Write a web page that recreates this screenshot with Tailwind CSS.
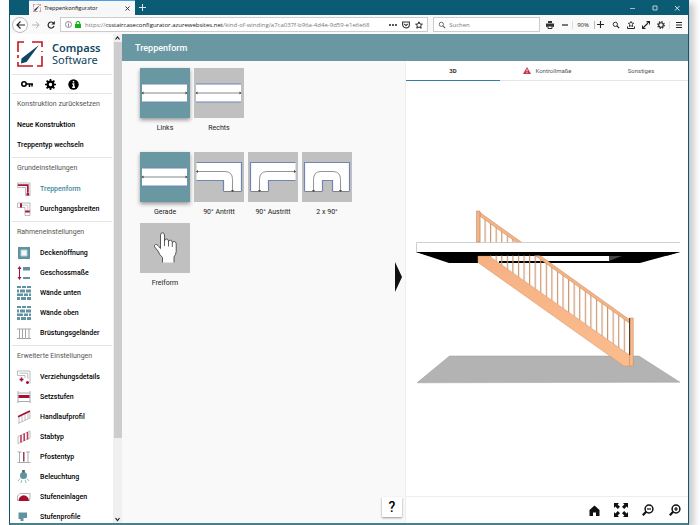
<!DOCTYPE html>
<html lang="de">
<head>
<meta charset="utf-8">
<title>Treppenkonfigurator</title>
<script src="https://cdn.jsdelivr.net/npm/@tailwindcss/browser@4"></script>
</head>
<body class="h-screen overflow-hidden bg-white pl-[9px] pr-[11px] font-['Roboto',sans-serif] text-[7px] leading-[10px] text-[#222]">
<svg class="hidden">
  <symbol id="logo" viewBox="0 0 26 26">
    <path d="M1 11V1h6M10 1h15v5M25 10v15h-5M16 25H1v-4M1 17v-3" fill="none" stroke="#c4161c" stroke-width="1.600" stroke-dasharray="none"/>
    <path d="M10 0h5v2h-5zM24 11h2v4h-2z" fill="#fff"/>
    <path d="M22 4 9.500 21 4 22.500 4.500 17.500Z" fill="#10465f"/>
  </symbol>
  <symbol id="magnifier" viewBox="0 0 12 12">
    <circle cx="5" cy="5" r="3.200" fill="none" stroke="currentColor" stroke-width="1.400"/>
    <path d="m7.400 7.400 3.400 3.400" stroke="currentColor" stroke-width="1.800"/>
  </symbol>
  <symbol id="wall" viewBox="0 0 14 14">
    <path d="M0 0h4v2H0zM5 0h4v2H5zM10 0h4v2h-4zM0 3.500h2v3H0zM3 3.500h5v3H3zM9 3.500h5v3H9zM0 7.500h6v2.500H0zM7 7.500h4v2.500H7zM12 7.500h2v2.500h-2zM0 11h3v3H0zM4 11h5v3H4zM10 11h4v3h-4z" fill="#5f93a0"/>
  </symbol>
  <symbol id="straight" viewBox="0 0 50 50">
    <path d="M2 16h45v18H2z" fill="#fff"/>
    <path d="M2 16h45M2 34h45" stroke="#6f86b5"/>
    <path d="M2 25h45" stroke="#555" stroke-width=".7"/>
    <path d="m1.500 25 2-1.500v3zM47.500 25l-2-1.500v3z" fill="#444"/>
  </symbol>
</svg>

<div class="flex h-full flex-col border-x border-b-2 border-[#0d566f] border-b-[#4a8189] bg-white shadow-[5px_3px_7px_rgba(0,0,0,0.22)]">
  <!-- Title bar -->
  <div class="flex h-[15px] shrink-0 items-stretch bg-[#0a5b73] text-white">
    <div class="ml-[19px] flex w-[106px] items-center border-t border-[#4aa0e8] bg-[#f7f7f7] pl-1 pr-[5px] text-[#333]">
      <svg class="mr-[3px] size-2" ><use href="#logo"/></svg>
      <span class="flex-1 font-['Lato',sans-serif] text-[6px]">Treppenkonfigurator</span>
      <button aria-label="Tab schließen"><svg class="size-[5px]" viewBox="0 0 5 5"><path d="m.5.5 4 4m0-4-4 4" stroke="#333"/></svg></button>
    </div>
    <button class="ml-1" aria-label="Neuer Tab"><svg class="size-[7px]" viewBox="0 0 7 7"><path d="M3.500 0v7M0 3.500h7" stroke="#d5e6ec"/></svg></button>
    <div class="ml-auto flex items-center gap-4 pr-2">
      <button aria-label="Minimieren"><svg class="size-[6px]" viewBox="0 0 6 6"><path d="M0 3.500h5" stroke="#9fc0ca"/></svg></button>
      <button aria-label="Maximieren"><svg class="size-[6px]" viewBox="0 0 6 6"><path d="M1 1h4v4H1z" fill="none" stroke="#b9d2da"/></svg></button>
      <button aria-label="Schließen"><svg class="size-[6px]" viewBox="0 0 6 6"><path d="m1 1 4.500 4.500m0-4.500L1 5.500" stroke="#dbe9ed"/></svg></button>
    </div>
  </div>

  <!-- Toolbar -->
  <div class="flex h-[19px] shrink-0 items-center bg-[#f9f9fa] font-['Open_Sans',sans-serif] text-[6px] text-[#222]">
    <button aria-label="Zurück" class="ml-[2px] flex size-4 items-center justify-center rounded-full border border-[#bbb] bg-white"><svg class="h-2 w-[9px]" viewBox="0 0 9 8"><path d="M9 4H1m3.500-3.500L1 4l3.500 3.500" fill="none" stroke="#222" stroke-width="1.200"/></svg></button>
    <button aria-label="Vor" class="ml-[4px]"><svg class="h-2 w-2" viewBox="0 0 9 8"><path d="M0 4h8M4.500.5 8 4 4.500 7.500" fill="none" stroke="#aaa"/></svg></button>
    <button aria-label="Neu laden" class="ml-[7px]"><svg class="size-2" viewBox="0 0 8 8"><path d="M6.500 2.200A3 3 0 1 0 7 4.800" fill="none" stroke="#222" stroke-width="1.200"/><path d="M7.800 0v3.400H4.400z" fill="#222"/></svg></button>
    <div class="ml-[5px] flex h-[15px] w-[141px] grow items-center overflow-hidden border border-[#ccc] bg-white px-1">
      <svg class="size-[7px] shrink-0" viewBox="0 0 7 7"><circle cx="3.500" cy="3.500" r="3" fill="none" stroke="#777" stroke-width=".8"/><path d="M3.500 3v2.500M3.500 1.500v.9" stroke="#777" stroke-width=".9"/></svg>
      <svg class="ml-[3px] mr-1 h-[7px] w-[6px] shrink-0" viewBox="0 0 6 7"><path d="M0 3h6v4H0z" fill="#12b312"/><path d="M1.200 3.200V2.300a1.800 1.800 0 0 1 3.600 0v.9" fill="none" stroke="#12b312" stroke-width="1.100"/></svg>
      <span class="w-0 grow overflow-hidden whitespace-nowrap text-[#777]">https://<span class="text-[#111]">csstaircaseconfigurator.azurewebsites.net</span>/kind-of-winding/a7ca037f-b96a-4d4e-9d59-e1e6e68</span>
      <button class="ml-4" aria-label="Seitenaktionen"><svg class="h-2 w-2" viewBox="0 0 8 8"><path d="M0 3.300h2v1.500H0zM3 3.300h2v1.500H3zM6 3.300h2v1.500H6z" fill="#222"/></svg></button>
      <button class="ml-[5px]" aria-label="Pocket"><svg class="size-2" viewBox="0 0 8 8"><path d="M.6 1h6.800v2.500a3.400 3.400 0 0 1-6.800 0zM2.300 3 4 4.600 5.700 3" fill="none" stroke="#333" stroke-width="1.100"/></svg></button>
      <button class="ml-[5px]" aria-label="Lesezeichen"><svg class="size-2" viewBox="0 0 8 8"><path d="m4 .8 1 2.200 2.400.2-1.800 1.600.6 2.400L4 6 1.800 7.200l.6-2.400L.6 3.200 3 3z" fill="none" stroke="#222"/></svg></button>
    </div>
    <label class="ml-[5px] flex h-[15px] w-[107px] items-center border border-[#ccc] bg-white px-1">
      <svg class="size-2 text-[#666]"><use href="#magnifier"/></svg>
      <input class="ml-[3px] w-0 grow bg-transparent font-['Open_Sans',sans-serif] text-[6px] outline-none placeholder:text-[#777]" placeholder="Suchen" aria-label="Suchen">
    </label>
    <button class="ml-[6px]" aria-label="Drucken"><svg class="size-2" viewBox="0 0 8 8"><path d="M2 0h4v2H2zM0 2.500h8v3.500H6.500V5h-5v1H0z" fill="#333"/><path d="M2 5h4v2.500H2z" fill="none" stroke="#333"/></svg></button>
    <button class="ml-[8px]" aria-label="Verkleinern"><svg class="h-2 w-[6px]" viewBox="0 0 6 8"><path d="M0 4h6" stroke="#222" stroke-width="1.200"/></svg></button>
    <span class="ml-[4px] h-2 border-l border-[#ddd] pl-[4px] leading-2">90%</span>
    <span class="ml-[5px] h-2 border-l border-[#bbb]"></span>
    <button class="ml-[2px]" aria-label="Vergrößern"><svg class="size-[7px]" viewBox="0 0 7 7"><path d="M0 3.500h7M3.500 0v7" stroke="#222" stroke-width="1.100"/></svg></button>
    <button class="ml-[8px]" aria-label="Suche"><svg class="size-2"><use href="#magnifier"/></svg></button>
    <button class="ml-[7px]" aria-label="Lesezeichen anzeigen"><svg class="size-2" viewBox="0 0 8 8"><path d="m4 .5.9 1.600 1.800.2-1.300 1.300.3 1.900L4 4.700l-1.700.8.3-1.900-1.300-1.300 1.800-.2z" fill="none" stroke="#222" stroke-width=".9"/><path d="M.5 5.500v2h7v-2" fill="none" stroke="#222"/></svg></button>
    <button class="ml-[7px]" aria-label="Vollbild"><svg class="size-2" viewBox="0 0 8 8"><path d="M1 7 7 1M4.500.6h3v3M.5 4.500v3h3" fill="none" stroke="#222" stroke-width="1.100"/></svg></button>
    <button class="ml-[7px]" aria-label="Einstellungen"><svg class="size-2" viewBox="0 0 8 8"><circle cx="4" cy="4" r="2.300" fill="none" stroke="#222" stroke-width="1.100"/><circle cx="4" cy="4" r="3.300" fill="none" stroke="#222" stroke-width="1.200" stroke-dasharray="1.300 1.290"/></svg></button>
    <button class="ml-[4px] mr-[6px] border-l border-[#ddd] pl-[6px]" aria-label="Menü"><svg class="h-2 w-[6px]" viewBox="0 0 6 8"><path d="M0 1.500h6M0 4h6M0 6.500h6" stroke="#222" stroke-width="1.100"/></svg></button>
  </div>

  <div class="flex min-h-0 flex-1">
    <!-- Sidebar -->
    <aside class="flex w-[112px] shrink-0">
      <div class="flex-1 overflow-hidden pl-[2px] pr-[1px]">
        <div class="flex h-10 items-center pl-[5px]">
          <svg class="size-[26px]"><use href="#logo"/></svg>
          <div class="ml-[9px] font-['Noto_Sans','Open_Sans',sans-serif] text-[11px] leading-[12px] text-[#10465f]"><div class="font-semibold">Compass</div><div>Software</div></div>
        </div>
        <div class="flex h-[19px] items-center border-t border-[#e4e4e4] pl-[9px] text-black">
          <button aria-label="Anmelden"><svg class="h-[8px] w-[12px]" viewBox="0 0 12 8"><circle cx="3" cy="4" r="2.200" fill="none" stroke="currentColor" stroke-width="1.600"/><path d="M5 4h7M8.500 4v3M11 4v2.500" stroke="currentColor" stroke-width="1.500"/></svg></button>
          <button class="ml-[12px]" aria-label="Optionen"><svg class="size-[11px]" viewBox="0 0 11 11"><circle cx="5.500" cy="5.500" r="2.800" fill="none" stroke="currentColor" stroke-width="2.200"/><path d="M5.500 0v2.500M5.500 8.500V11M0 5.500h2.500M8.500 5.500H11M1.600 1.600l1.800 1.800M7.600 7.600l1.800 1.800M1.600 9.400l1.800-1.800M7.600 3.400l1.800-1.800" stroke="currentColor" stroke-width="1.700"/></svg></button>
          <button class="ml-[12px]" aria-label="Info"><svg class="size-[11px]" viewBox="0 0 11 11"><circle cx="5.500" cy="5.500" r="5.200" fill="currentColor"/><path d="M5.500 2v1.600M4.300 5h1.400v3M4.200 8.200h2.800" stroke="#fff" stroke-width="1.400" fill="none"/></svg></button>
        </div>
        <nav class="font-medium text-black">
          <section class="border-t border-[#e4e4e4] pb-[2px] pl-[5px]">
            <h2 class="h-[21px] whitespace-nowrap font-normal leading-[21px] text-[#555]">Konstruktion zurücksetzen</h2>
            <a href="#" class="flex h-5 items-center">Neue Konstruktion</a>
            <a href="#" class="flex h-5 items-center">Treppentyp wechseln</a>
          </section>
          <section class="border-t border-[#e4e4e4] pb-[2px] pl-[5px]">
            <h2 class="h-[21px] font-normal leading-[21px] text-[#555]">Grundeinstellungen</h2>
            <a href="#" class="flex h-5 items-center gap-[9px] text-[#3f87a0]"><svg class="size-[14px]" viewBox="0 0 14 14"><path d="M.5 1h12.500v12.500H8.500V5.500H.5z" fill="#fff" stroke="#aaa" stroke-width=".8"/><path d="M1 3.200h9.800v7.500" fill="none" stroke="#a3163a" stroke-width="1.800"/><path d="M9.500 11h2.600v2.500H9.500z" fill="#a3163a"/></svg>Treppenform</a>
            <a href="#" class="flex h-5 items-center gap-[9px]"><svg class="size-[14px]" viewBox="0 0 14 14"><path d="M.5 1h12.500v12.500H8V5.500H.5z" fill="#fff" stroke="#aaa" stroke-width=".8"/><path d="M2.500 3.200h8.300v5" fill="none" stroke="#bbb" stroke-width=".8"/><path d="M3 1.200h2v4.200H3zM8.200 8.500h4.600v2H8.200z" fill="#a3163a"/></svg>Durchgangsbreiten</a>
          </section>
          <section class="border-t border-[#e4e4e4] pb-[2px] pl-[5px]">
            <h2 class="h-[21px] font-normal leading-[21px] text-[#555]">Rahmeneinstellungen</h2>
            <a href="#" class="flex h-5 items-center gap-[9px]"><svg class="size-[14px]" viewBox="0 0 14 14"><path d="M1 1h12v12H1z" fill="#5f93a0"/><path d="M4 4h6v6H4z" fill="#f3f7f8" stroke="#b7d0d6"/></svg>Deckenöffnung</a>
            <a href="#" class="flex h-5 items-center gap-[9px]"><svg class="size-[14px]" viewBox="0 0 14 14"><path d="M6 1h7v3.500H6zM6 11h7v2H6z" fill="#5f93a0"/><path d="M2.500 2v10" stroke="#a3163a"/><path d="m2.500 0 2 3h-4zM2.500 14l2-3h-4z" fill="#a3163a"/></svg>Geschossmaße</a>
            <a href="#" class="flex h-5 items-center gap-[9px]"><svg class="size-[14px]"><use href="#wall"/></svg>Wände unten</a>
            <a href="#" class="flex h-5 items-center gap-[9px]"><svg class="size-[14px]"><use href="#wall"/></svg>Wände oben</a>
            <a href="#" class="flex h-5 items-center gap-[9px]"><svg class="size-[14px]" viewBox="0 0 14 14"><path d="M0 3h14M0 12.500h14M2.500 3v9.500M5.500 3v9.500M8.500 3v9.500M12 3v9.500" stroke="#a5a5a5"/></svg>Brüstungsgeländer</a>
          </section>
          <section class="border-t border-[#e4e4e4] pb-[2px] pl-[5px]">
            <h2 class="h-[21px] font-normal leading-[21px] text-[#555]">Erweiterte Einstellungen</h2>
            <a href="#" class="flex h-5 items-center gap-[9px]"><svg class="size-[14px]" viewBox="0 0 14 14"><path d="M.5 5.500V1h12.500v12.500M.5 5.500H8V8M2.500 3.200h8.300v5.500" fill="none" stroke="#aaa" stroke-width=".8"/><path d="M4.500 7.500v4M2.500 9.500h4M10.500 11v3M9 12.500h3" stroke="#a3163a" stroke-width="1.600"/></svg>Verziehungsdetails</a>
            <a href="#" class="flex h-5 items-center gap-[9px]"><svg class="size-[14px]" viewBox="0 0 14 14"><path d="M1 1v12M13 1v12M1 3h12M1 11.500h12" stroke="#aaa"/><path d="M1.500 5h11v3h-11z" fill="#a80f2e"/></svg>Setzstufen</a>
            <a href="#" class="flex h-5 items-center gap-[9px]"><svg class="size-[14px]" viewBox="0 0 14 14"><path d="M2 7v6M5 5.500v6M8 4v6M11 3v5.500M13 2v6L1 13.500" fill="none" stroke="#b5b5b5" stroke-width=".9"/><path d="M1 6.800 13 1" stroke="#a80f2e" stroke-width="1.800"/></svg>Handlaufprofil</a>
            <a href="#" class="flex h-5 items-center gap-[9px]"><svg class="size-[14px]" viewBox="0 0 14 14"><path d="M1 6.500 13 1v7L1 13.500z" fill="none" stroke="#b5b5b5" stroke-width=".9"/><path d="M4 5v7.500M7.200 3.500V11M10.500 2v7.500" stroke="#b93a5c" stroke-width="1.600"/></svg>Stabtyp</a>
            <a href="#" class="flex h-5 items-center gap-[9px]"><svg class="size-[14px]" viewBox="0 0 14 14"><path d="M.5 2h4M9 2h4M.5 12.500h13M2.500 2v10.500M11 2v10.500" stroke="#aaa"/><path d="M6.800 2v9.500" stroke="#8d1f3a" stroke-width="1.300"/></svg>Pfostentyp</a>
            <a href="#" class="flex h-5 items-center gap-[9px]"><svg class="size-[14px]" viewBox="0 0 14 14"><circle cx="6.500" cy="5.500" r="3.500" fill="#5f93a0"/><path d="M5.200 0h2.600v2.500H5.200z" fill="#465"/><path d="M3 8.500 1 11M10 8.500l2 2.500M4.800 10 4 13M8.200 10l.8 3" stroke="#9ab8c0"/></svg>Beleuchtung</a>
            <a href="#" class="flex h-5 items-center gap-[9px]"><svg class="size-[14px]" viewBox="0 0 14 14"><path d="M.5 11V6L3 3.500h10V7l-.5 4" fill="none" stroke="#aaa" stroke-width=".9"/><path d="M1.500 11a5 5.500 0 0 1 10.500 0z" fill="#a80f2e"/></svg>Stufeneinlagen</a>
            <a href="#" class="flex h-5 items-center gap-[9px]"><svg class="size-[14px]" viewBox="0 0 14 14"><path d="M1.500 2.500H10V8H6.500v3h-3V9h-2z" fill="#5f93a0"/></svg>Stufenprofile</a>
          </section>
        </nav>
      </div>
      <div class="flex w-[9px] flex-col items-center bg-[#f0f0f0]">
        <svg class="h-2 w-[5px]" viewBox="0 0 5 8"><path d="M.5 5.500 2.500 3l2 2.500" fill="none" stroke="#222" stroke-width="1.200"/></svg>
        <div class="h-[81%] w-[8px] bg-[#cdcdcd]"></div>
        <svg class="mt-auto h-2 w-[5px]" viewBox="0 0 5 8"><path d="m.5 3 2 2.500 2-2.500" fill="none" stroke="#222" stroke-width="1.200"/></svg>
      </div>
    </aside>

    <div class="flex min-w-0 flex-1 flex-col">
      <header class="flex h-[27px] shrink-0 items-center bg-[#6998a3] pl-[13px]"><h1 class="text-[9px] font-medium text-white">Treppenform</h1></header>
      <div class="grid min-h-0 flex-1 grid-cols-2">
        <main class="relative min-w-0 bg-[#f9f9f9] pl-[18px] pt-[7px]">
          <div class="mb-[13px] flex gap-1">
            <button class="w-[50px]"><svg class="size-[50px] bg-[#6998a3] shadow-[0_2px_4px_rgba(0,0,0,0.4)]"><use href="#straight"/></svg><span class="block h-[21px] leading-[21px]">Links</span></button>
            <button class="w-[50px]"><svg class="size-[50px] bg-[#c0c0c0]"><use href="#straight"/></svg><span class="block h-[21px] leading-[21px]">Rechts</span></button>
          </div>
          <div class="grid grid-cols-[repeat(4,50px)] gap-x-1">
            <button><svg class="size-[50px] bg-[#6998a3] shadow-[0_2px_4px_rgba(0,0,0,0.4)]"><use href="#straight"/></svg><span class="block h-[21px] leading-[21px]">Gerade</span></button>
            <button><svg class="size-[50px] bg-[#c0c0c0]" viewBox="0 0 50 50"><path d="M2.500 10.500h45V39H29.500V28.500h-27z" fill="#fff"/><path d="M2.500 10.500h45V39M29.500 39V28.500h-27" fill="none" stroke="#6f86b5" stroke-width="1.200"/><path d="M2.500 19.500H31q7.500 0 7.500 8V39M29.500 39.500h18" fill="none" stroke="#666" stroke-width=".7"/><path d="m2 19.500 2-1.500v3zM38.500 40l-1.500-2h3z" fill="#444"/></svg><span class="block h-[21px] whitespace-nowrap leading-[21px]">90° Antritt</span></button>
            <button><svg class="size-[50px] bg-[#c0c0c0]" viewBox="0 0 50 50"><path d="M47.500 10.500h-45V39H20.500V28.500h27z" fill="#fff"/><path d="M47.500 10.500h-45V39M20.500 39V28.500h27" fill="none" stroke="#6f86b5" stroke-width="1.200"/><path d="M47.500 19.500H19q-7.500 0-7.500 8V39M20.500 39.500h-18" fill="none" stroke="#666" stroke-width=".7"/><path d="m48 19.500-2-1.500v3zM11.500 40l-1.500-2h3z" fill="#444"/></svg><span class="block h-[21px] whitespace-nowrap leading-[21px]">90° Austritt</span></button>
            <button><svg class="size-[50px] bg-[#c0c0c0]" viewBox="0 0 50 50"><path d="M2.500 39V10.500h45V39h-17V28.500h-10V39z" fill="#fff"/><path d="M2.500 39V10.500h45V39M30.500 39V28.500h-10V39" fill="none" stroke="#6f86b5" stroke-width="1.200"/><path d="M11.500 39V27.500q0-8 7.500-8h12q7.500 0 7.500 8V39M2.500 39.500h18M30.500 39.500h17" fill="none" stroke="#666" stroke-width=".7"/><path d="m11.500 40-1.500-2h3zM38.500 40l-1.500-2h3z" fill="#444"/></svg><span class="block h-[21px] leading-[21px]">2 x 90°</span></button>
            <button><svg class="size-[50px] bg-[#c0c0c0]" viewBox="0 0 50 50"><path d="M22.500 39.500v-5q-3-2.500-4.500-6.500l-3.300-4q-.8-2 .8-2.500 1.500-.3 2.500 1l2.500 3V12q.2-2.200 2-2.200t2 2.200v6q.3-2 2-2t2 2v.7q.4-1.700 2-1.500t1.800 2v.6q.4-1.500 2-1.300 1.900.2 1.900 2.500v7.500q-.2 3-2.200 5.500v5.500z" fill="#fff"/><path d="M22.500 39.500v-5q-3-2.500-4.500-6.500l-3.300-4q-.8-2 .8-2.500 1.500-.3 2.500 1l2.500 3V12q.2-2.200 2-2.200t2 2.200v11M24.500 18q.3-2 2-2t2 2v5.500M28.500 18.700q.4-1.700 2-1.500t1.800 2V24M32.300 19.800q.4-1.500 2-1.300 1.900.2 1.900 2.500v7.500q-.2 3-2.200 5.500v5.500" fill="none" stroke="#333" stroke-width=".8"/></svg><span class="block h-[21px] leading-[21px]">Freiform</span></button>
          </div>
          <button class="absolute right-[3px] top-[201px]" aria-label="Bereich verschieben"><svg class="h-[30px] w-[7px]" viewBox="0 0 7 30"><path d="M0 0 7 15 0 30z" fill="#111"/></svg></button>
          <button class="absolute bottom-[6px] right-[3px] h-5 w-5 bg-white text-[14px] font-medium leading-5 text-black shadow-[0_1px_2px_rgba(0,0,0,0.4)]">?</button>
        </main>

        <section class="flex min-w-0 flex-col border-l border-[#eee] bg-white">
          <div class="grid h-5 shrink-0 grid-cols-3 text-[6px] text-[#555]">
            <button class="border-b border-[#2f7fa5] font-bold text-[#333]">3D</button>
            <button class="flex items-center justify-center gap-[5px] border-b border-[#e5e5e5]"><svg class="h-[7px] w-2" viewBox="0 0 8 7"><path d="M4 0 8 7H0z" fill="#c0354f"/><path d="M4 2.200v2.300M4 5.200v1" stroke="#fff" stroke-width=".9"/></svg>Kontrollmaße</button>
            <button class="border-b border-[#e5e5e5]">Sonstiges</button>
          </div>
          <svg class="min-h-0 w-full flex-1" viewBox="406 81 282 415" role="img" aria-label="3D-Ansicht der Treppe">
            <defs>
              <pattern id="bars" patternUnits="userSpaceOnUse" x="484.500" y="200" width="5.570" height="200"><path d="M.6 0v200" stroke="#c98f68" stroke-width="1.100"/></pattern>
              <linearGradient id="wood" x1="0" y1="0" x2="0" y2="1"><stop offset="0" stop-color="#f6b183"/><stop offset="1" stop-color="#fbbd8e"/></linearGradient>
            </defs>
            <path d="M449.500 356H639l41 26.200-263 .6z" fill="#b3b3b3" stroke="#9c9c9c" stroke-width=".5"/>
            <path d="M416 252h264l-40 11H449z"/>
            <path d="M478 256h131v5H499v2h-21z" fill="#fff"/>
            <path d="M609 256h13l-13 5z" fill="#444"/>
            <path d="M480 214 629 320v35L480 249.700z" fill="url(#bars)"/>
            <path d="M478 256h11l141 99.500V366h-6L478 262.500z" fill="url(#wood)" stroke="#d58f60" stroke-width=".5"/>
            <path d="M480 212.500 630 320v3.500L480 216.300z" fill="#f4b384" stroke="#c98457" stroke-width=".5"/>
            <path d="M416.500 242.500H680V252H416.500z" fill="#fff"/>
            <path d="M680 242.500H416.500V252" fill="none" stroke="#c4c4c4" stroke-width=".8"/>
            <path d="M416 252h264l-12 3.500H428z"/>
            <path d="M476.500 211h3.500v31h-3.500z" fill="#f4b384" stroke="#b37c55" stroke-width=".5"/>
            <path d="M629.500 318h3.800v48h-3.800z" fill="#f7b98b" stroke="#c98457" stroke-width=".5"/>
            <path d="M629.600 318v37" stroke="#443a35" stroke-width="1.100"/>
          </svg>
          <div class="flex h-[27px] shrink-0 items-center justify-end border-t border-[#eee] pr-[7px] text-[#111]">
            <button aria-label="Startansicht"><svg class="size-[11px]" viewBox="0 0 11 11"><path d="M5.500.5 10.500 5v6H7V7.500H4V11H.5V5z" fill="currentColor"/></svg></button>
            <button class="ml-[14px]" aria-label="Einpassen"><svg class="size-[14px]" viewBox="0 0 14 14"><path d="M0 0h5L3.600 1.400 6 3.800 3.800 6 1.400 3.600 0 5zM14 0v5l-1.400-1.400L10.200 6 8 3.800l2.400-2.400L9 0zM0 14V9l1.400 1.400L3.800 8 6 10.200l-2.400 2.400L5 14zM14 14H9l1.400-1.400L8 10.200 10.200 8l2.400 2.400L14 9z" fill="currentColor"/></svg></button>
            <button class="ml-[14px]" aria-label="Herauszoomen"><svg class="size-[12px]" viewBox="0 0 12 12"><circle cx="7" cy="5" r="3.900" fill="none" stroke="currentColor" stroke-width="1.500"/><path d="M4.200 7.800.8 11.200" stroke="currentColor" stroke-width="2.200"/><path d="M5 5h4" stroke="currentColor" stroke-width="1.200"/></svg></button>
            <button class="ml-[15px]" aria-label="Hineinzoomen"><svg class="size-[12px]" viewBox="0 0 12 12"><circle cx="7" cy="5" r="3.900" fill="none" stroke="currentColor" stroke-width="1.500"/><path d="M4.200 7.800.8 11.200" stroke="currentColor" stroke-width="2.200"/><path d="M5 5h4M7 3v4" stroke="currentColor" stroke-width="1.200"/></svg></button>
          </div>
        </section>
      </div>
    </div>
  </div>
</div>
</body>
</html>
